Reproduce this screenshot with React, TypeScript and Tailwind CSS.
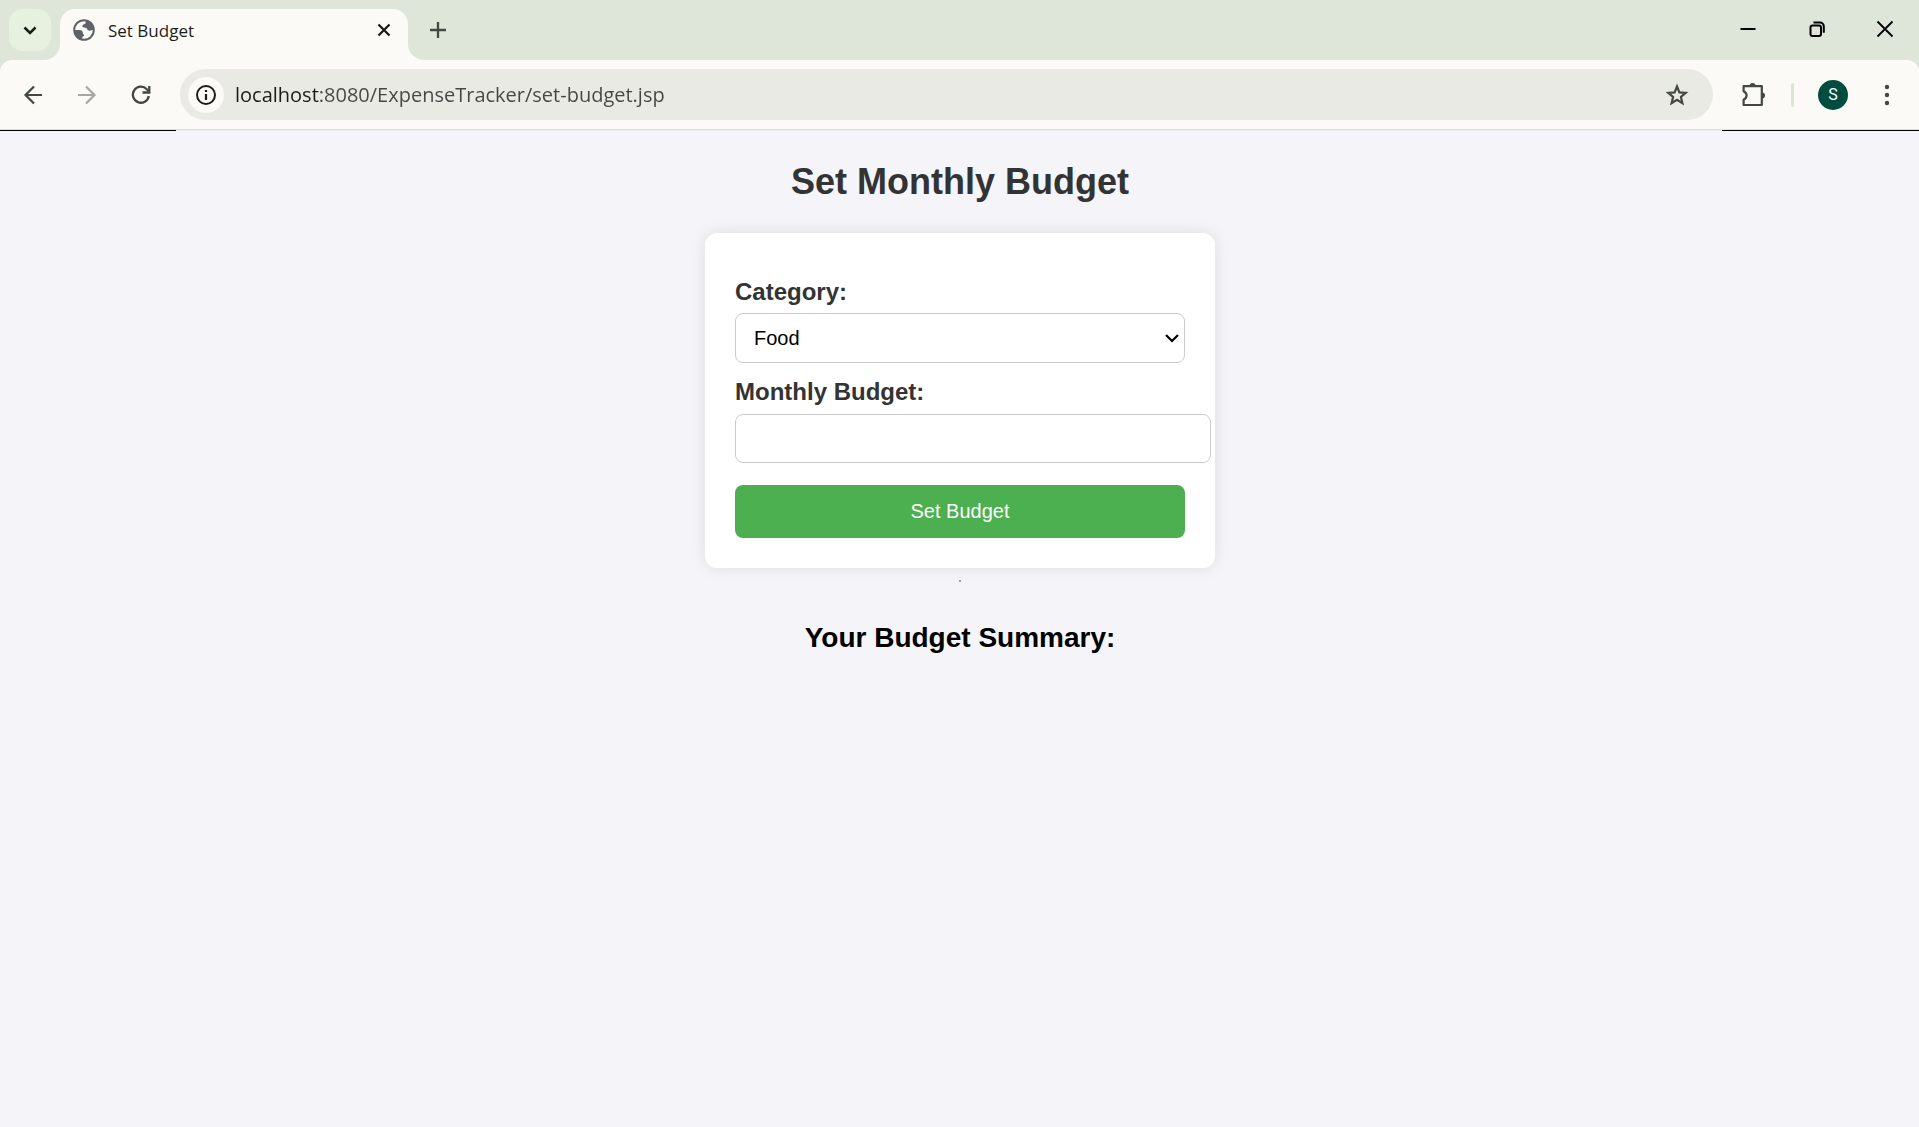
import type { ReactNode } from "react";

function Icon({ size, children, className = "" }: { size: number; children: ReactNode; className?: string }) {
  return (
    <svg width={size} height={size} viewBox="0 0 24 24" fill="none" stroke="currentColor" strokeWidth="2" aria-hidden="true" className={`shrink-0 ${className}`}>
      {children}
    </svg>
  );
}

function TabStrip() {
  return (
    <div className="flex h-15 bg-[#fbfaf6]">
      <div className="flex w-15 shrink-0 rounded-br-[16px] bg-[#dee5d9] pt-[9px] pl-[9px]">
        <button type="button" aria-label="Search tabs" className="flex size-[42px] items-center justify-center rounded-[14px] bg-[#e6f2df] text-[#1b1c19]">
          <Icon size={24}><path d="m6.5 9.5 5.5 5.5 5.5-5.5" strokeWidth="2.6" /></Icon>
        </button>
      </div>
      <div className="w-[348px] shrink-0 bg-[#dee5d9] pt-[9px]">
        <div className="flex h-full items-center rounded-t-[15px] bg-[#fbfaf6] pr-3 pb-[9px] pl-3">
          <Icon size={24} className="text-[#5f6368]">
            <circle cx="12" cy="12" r="9.800" />
            <path fill="currentColor" stroke="none" d="M2 12h5.200c2 0 3.300.7 3.600 2.300.1.800 0 1.400.2 1.700.4.600 1.200.4 1.100 1.400-.1.900-1.300.8-1.700 1.500-.3.600-.1 1.400-.1 3C5.500 21.500 2 17 2 12z" />
            <path fill="currentColor" stroke="none" d="M13.500 2.200c.4 1.600.4 2.800-.5 3.600-.9.700-2.400.8-2.600 2-.2 1.100.6 1.600 1.900 1.700 1.800.1 2.500.7 3 1.800.5 1.200 1.300 1.600 2.600 1.400 1.300-.2 2.300-.9 4-.7C22.300 7 18.500 2.700 13.500 2.200z" />
          </Icon>
          <span className="mt-[2px] ml-3 grow font-['Open_Sans',sans-serif] text-[17px] leading-6 text-[#1b1c19]">Set Budget</span>
          <button type="button" aria-label="Close tab" className="flex size-6 items-center justify-center text-[#1b1c19]">
            <Icon size={24}><path d="m6.500 6.500 11 11m0-11-11 11" strokeWidth="2.300" /></Icon>
          </button>
        </div>
      </div>
      <div className="flex grow items-start rounded-bl-[16px] bg-[#dee5d9]">
        <button type="button" aria-label="New tab" className="flex h-15 w-15 items-center justify-center text-[#434841]">
          <Icon size={24}><path d="M12 4v16M4 12h16" strokeWidth="2.300" /></Icon>
        </button>
        <div className="ml-auto flex text-black">
          <button type="button" aria-label="Minimize" className="flex h-[58px] w-[69px] items-center justify-center">
            <Icon size={24}><path d="M4.500 12h15" /></Icon>
          </button>
          <button type="button" aria-label="Restore" className="flex h-[58px] w-[69px] items-center justify-center">
            <Icon size={24}>
              <rect x="5.500" y="8.500" width="10.500" height="10.500" rx="2" />
              <path d="M8.500 5.500h6.500a3.800 3.800 0 0 1 3.800 3.800v6.500" />
            </Icon>
          </button>
          <button type="button" aria-label="Close window" className="flex h-[58px] w-[68px] items-center justify-center">
            <Icon size={24}><path d="m4.500 4.500 15 15m0-15-15 15" strokeWidth="1.800" /></Icon>
          </button>
        </div>
      </div>
    </div>
  );
}

function Toolbar() {
  const nav = "flex w-[54px] h-10 items-center justify-center text-[#434841]";
  return (
    <div className="bg-[#dee5d9]">
      <div className="flex h-[69px] items-center rounded-t-[12px] bg-[#fbfaf6] pl-[6px]">
        <button type="button" aria-label="Back" className={nav}>
          <Icon size={24}><path d="M21 12H4.500m8.500-8.500L4.500 12l8.500 8.500" strokeWidth="2.200" /></Icon>
        </button>
        <button type="button" aria-label="Forward" className="flex h-10 w-[54px] items-center justify-center text-[#a5a7a0]">
          <Icon size={24}><path d="M3 12h16.500M11 3.500l8.500 8.500-8.500 8.500" strokeWidth="2.200" /></Icon>
        </button>
        <button type="button" aria-label="Reload" className={nav}>
          <Icon size={24}>
            <path d="M19.800 13a8 8 0 1 1-2-6.700L20 8.500" strokeWidth="2.300" />
            <path d="M20.300 3v6.500h-6.800" strokeWidth="2.300" />
          </Icon>
        </button>
        <div className="ml-3 flex h-[51px] min-w-0 grow items-center rounded-full bg-[#e9eae4] pr-6 pl-2">
          <button type="button" aria-label="Site information" className="flex size-9 shrink-0 items-center justify-center rounded-full bg-[#fbfaf6] text-[#1b1c19]">
            <Icon size={24}>
              <circle cx="12" cy="12" r="9" />
              <path d="M12 11v6M12 7v2" strokeWidth="2.200" />
            </Icon>
          </button>
          <input
            type="text"
            aria-label="Address"
            defaultValue="localhost:8080/ExpenseTracker/set-budget.jsp"
            className="ml-[11px] min-w-0 grow bg-linear-to-r from-[#1b1c19] from-[84px] to-[#454744] to-[84px] bg-clip-text font-['Open_Sans',sans-serif] text-[20px] leading-7 text-transparent caret-[#1b1c19] outline-none"
          />
          <button type="button" aria-label="Bookmark this tab" className="text-[#434841]">
            <Icon size={24}><path d="m12 3.500 2.400 5.900 6.300.5-4.800 4.100 1.500 6.200-5.400-3.400-5.400 3.400 1.500-6.200-4.800-4.100 6.300-.5z" strokeWidth="2.200" /></Icon>
          </button>
        </div>
        <button type="button" aria-label="Extensions" className="ml-[27px] text-[#434841]">
          <svg width="26" height="26" viewBox="0 0 26 26" fill="none" stroke="currentColor" strokeWidth="2.200" strokeLinejoin="round" aria-hidden="true">
            <path d="M3.600 4.200h18.200v18.800H3.600v-5.200c4-2.200 4-6.400 0-8.600z" />
            <path d="M9.600 4a3 3 0 0 1 6 0zM22 10.500a3 3 0 0 1 0 6z" fill="currentColor" stroke="none" />
          </svg>
        </button>
        <span className="ml-[25px] h-6 w-[3px] rounded-full bg-[#dbe6d5]" />
        <button type="button" aria-label="Profile" className="ml-6 flex size-[30px] items-center justify-center rounded-full bg-[#004d40] font-[Roboto] text-[16px] leading-5 text-white">
          S
        </button>
        <button type="button" aria-label="Menu" className="mr-5 ml-[27px] text-[#434841]">
          <Icon size={24}><g fill="currentColor" stroke="none"><circle cx="12" cy="4" r="2.200" /><circle cx="12" cy="12" r="2.200" /><circle cx="12" cy="20" r="2.200" /></g></Icon>
        </button>
      </div>
      <div className="h-px bg-[#dfe0dc]" />
      <div className="flex h-px justify-between bg-[#ebebee]">
        <span className="w-44 bg-black" />
        <span className="w-[197px] bg-black" />
      </div>
    </div>
  );
}

export default function App() {
  return (
    <div className="flex min-h-screen flex-col bg-[#f4f4f9]">
      <header>
        <TabStrip />
        <Toolbar />
      </header>
      <main className="flex flex-col items-center pt-[29px] pl-px font-['Liberation_Sans',Arial,sans-serif]">
        <h1 className="text-[36px] leading-[44px] font-bold text-[#333]">Set Monthly Budget</h1>
        <form className="mt-[29px] w-[510px] rounded-[12px] bg-white px-[30px] pt-[45px] pb-[30px] shadow-[0_0_15px_rgba(0,0,0,0.1)]">
          <label htmlFor="category" className="block text-[24px] leading-7 font-bold text-[#333]">Category:</label>
          <div className="relative mt-[7px]">
            <select id="category" defaultValue="Food" className="block h-[50px] w-full appearance-none rounded-[8px] border border-[#ccc] bg-white px-[18px] text-[20px] leading-6 text-black">
              <option>Food</option>
            </select>
            <svg width="14" height="10" viewBox="0 0 14 10" fill="none" stroke="black" strokeWidth="2.200" aria-hidden="true" className="pointer-events-none absolute top-5 right-[6px]">
              <path d="m1 2 6 6 6-6" />
            </svg>
          </div>
          <label htmlFor="budget" className="mt-[15px] block text-[24px] leading-7 font-bold text-[#333]">Monthly Budget:</label>
          <input id="budget" type="text" className="mt-2 block h-[49px] w-[476px] rounded-[8px] border border-[#ccc] bg-white px-3 text-[20px]" />
          <button type="submit" className="mt-[22px] block h-[53px] w-full rounded-[8px] bg-[#4caf50] pb-[2px] text-[20px] leading-6 text-white">Set Budget</button>
        </form>
        <hr className="mt-3 h-[2px] w-[2px] border-0 bg-[#a0a0a4]" />
        <h2 className="mt-10 text-[28px] leading-8 font-bold text-black">Your Budget Summary:</h2>
      </main>
    </div>
  );
}
